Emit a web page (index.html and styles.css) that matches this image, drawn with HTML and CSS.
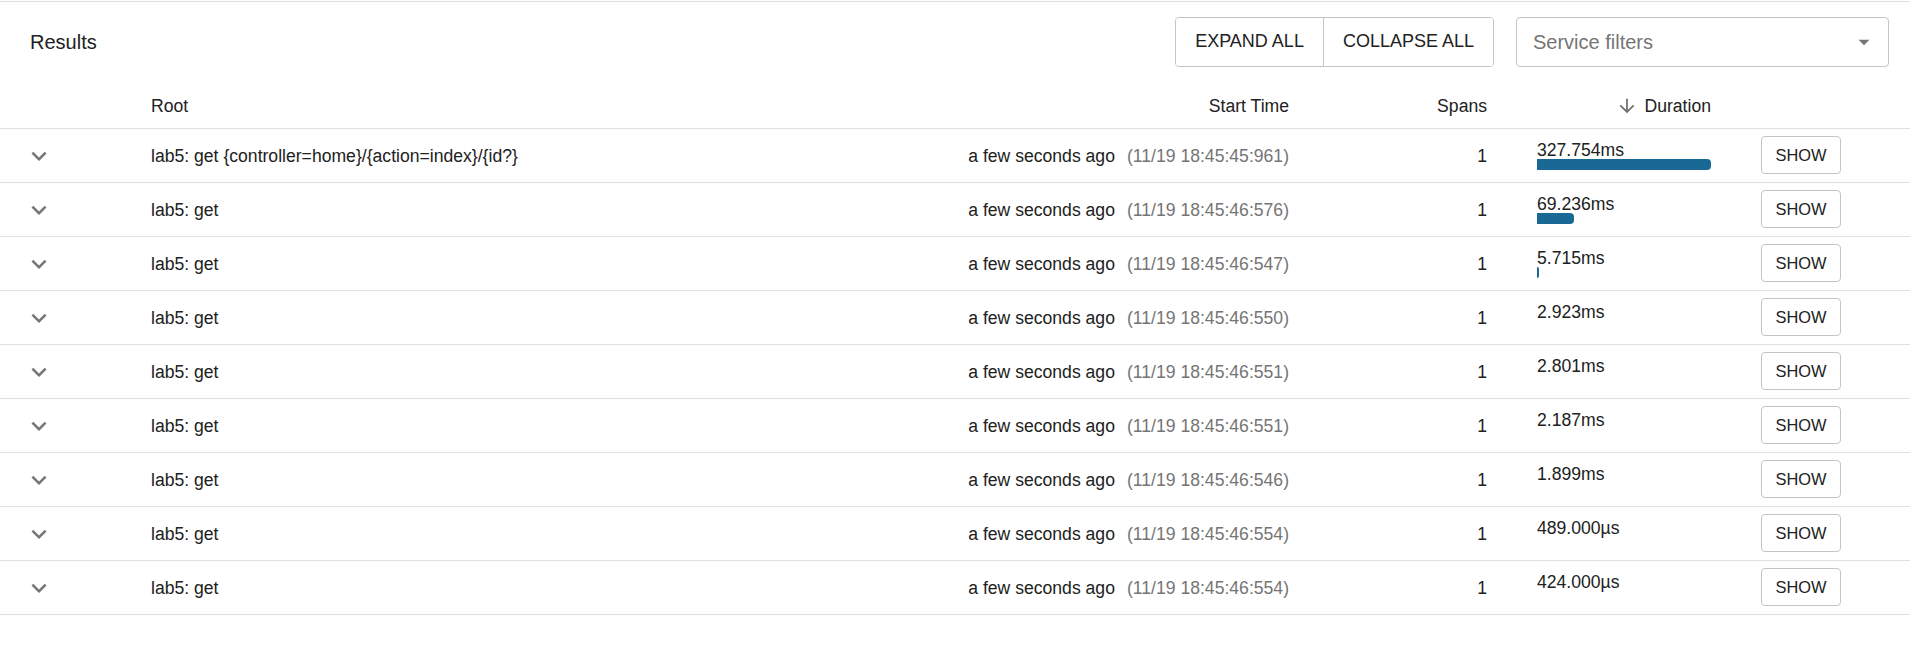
FILE: index.html
```html
<!DOCTYPE html>
<html lang="en">
<head>
<meta charset="utf-8">
<title>Results</title>
<link rel="stylesheet" href="styles.css">
</head>
<body>
<div class="page">
  <div class="toolbar">
    <div class="title">Results</div>
    <div class="btn-group">
      <button class="group-btn">EXPAND ALL</button>
      <button class="group-btn">COLLAPSE ALL</button>
    </div>
    <div class="select">
      <span class="placeholder">Service filters</span>
      <svg class="drop-icon" viewBox="0 0 24 24" width="26" height="26"><path d="M7 10l5 5 5-5z" fill="#757575"/></svg>
    </div>
  </div>

  <div class="row head">
    <div class="cell"></div>
    <div class="cell">Root</div>
    <div class="cell right">Start Time</div>
    <div class="cell right">Spans</div>
    <div class="cell right dur-head">
      <svg class="sort-icon" viewBox="0 0 24 24" width="22" height="22"><path d="M20 12l-1.41-1.41L13 16.17V4h-2v12.17l-5.58-5.59L4 12l8 8 8-8z" fill="#757575"/></svg>
      <span>Duration</span>
    </div>
    <div class="cell"></div>
  </div>

  <div class="row">
    <div class="cell chev"><svg viewBox="0 0 24 24" width="30" height="30"><path d="M16.59 8.59 12 13.17 7.41 8.59 6 10l6 6 6-6z" fill="#757575"/></svg></div>
    <div class="cell">lab5: get {controller=home}/{action=index}/{id?}</div>
    <div class="cell right">a few seconds ago<span class="abs">(11/19 18:45:45:961)</span></div>
    <div class="cell right">1</div>
    <div class="cell dur"><span class="dur-text">327.754ms</span><span class="bar" style="width:100%"></span></div>
    <div class="cell act"><button class="show">SHOW</button></div>
  </div>

  <div class="row">
    <div class="cell chev"><svg viewBox="0 0 24 24" width="30" height="30"><path d="M16.59 8.59 12 13.17 7.41 8.59 6 10l6 6 6-6z" fill="#757575"/></svg></div>
    <div class="cell">lab5: get</div>
    <div class="cell right">a few seconds ago<span class="abs">(11/19 18:45:46:576)</span></div>
    <div class="cell right">1</div>
    <div class="cell dur"><span class="dur-text">69.236ms</span><span class="bar" style="width:21%"></span></div>
    <div class="cell act"><button class="show">SHOW</button></div>
  </div>

  <div class="row">
    <div class="cell chev"><svg viewBox="0 0 24 24" width="30" height="30"><path d="M16.59 8.59 12 13.17 7.41 8.59 6 10l6 6 6-6z" fill="#757575"/></svg></div>
    <div class="cell">lab5: get</div>
    <div class="cell right">a few seconds ago<span class="abs">(11/19 18:45:46:547)</span></div>
    <div class="cell right">1</div>
    <div class="cell dur"><span class="dur-text">5.715ms</span><span class="bar" style="width:1%"></span></div>
    <div class="cell act"><button class="show">SHOW</button></div>
  </div>

  <div class="row">
    <div class="cell chev"><svg viewBox="0 0 24 24" width="30" height="30"><path d="M16.59 8.59 12 13.17 7.41 8.59 6 10l6 6 6-6z" fill="#757575"/></svg></div>
    <div class="cell">lab5: get</div>
    <div class="cell right">a few seconds ago<span class="abs">(11/19 18:45:46:550)</span></div>
    <div class="cell right">1</div>
    <div class="cell dur"><span class="dur-text">2.923ms</span><span class="bar" style="width:0%"></span></div>
    <div class="cell act"><button class="show">SHOW</button></div>
  </div>

  <div class="row">
    <div class="cell chev"><svg viewBox="0 0 24 24" width="30" height="30"><path d="M16.59 8.59 12 13.17 7.41 8.59 6 10l6 6 6-6z" fill="#757575"/></svg></div>
    <div class="cell">lab5: get</div>
    <div class="cell right">a few seconds ago<span class="abs">(11/19 18:45:46:551)</span></div>
    <div class="cell right">1</div>
    <div class="cell dur"><span class="dur-text">2.801ms</span><span class="bar" style="width:0%"></span></div>
    <div class="cell act"><button class="show">SHOW</button></div>
  </div>

  <div class="row">
    <div class="cell chev"><svg viewBox="0 0 24 24" width="30" height="30"><path d="M16.59 8.59 12 13.17 7.41 8.59 6 10l6 6 6-6z" fill="#757575"/></svg></div>
    <div class="cell">lab5: get</div>
    <div class="cell right">a few seconds ago<span class="abs">(11/19 18:45:46:551)</span></div>
    <div class="cell right">1</div>
    <div class="cell dur"><span class="dur-text">2.187ms</span><span class="bar" style="width:0%"></span></div>
    <div class="cell act"><button class="show">SHOW</button></div>
  </div>

  <div class="row">
    <div class="cell chev"><svg viewBox="0 0 24 24" width="30" height="30"><path d="M16.59 8.59 12 13.17 7.41 8.59 6 10l6 6 6-6z" fill="#757575"/></svg></div>
    <div class="cell">lab5: get</div>
    <div class="cell right">a few seconds ago<span class="abs">(11/19 18:45:46:546)</span></div>
    <div class="cell right">1</div>
    <div class="cell dur"><span class="dur-text">1.899ms</span><span class="bar" style="width:0%"></span></div>
    <div class="cell act"><button class="show">SHOW</button></div>
  </div>

  <div class="row">
    <div class="cell chev"><svg viewBox="0 0 24 24" width="30" height="30"><path d="M16.59 8.59 12 13.17 7.41 8.59 6 10l6 6 6-6z" fill="#757575"/></svg></div>
    <div class="cell">lab5: get</div>
    <div class="cell right">a few seconds ago<span class="abs">(11/19 18:45:46:554)</span></div>
    <div class="cell right">1</div>
    <div class="cell dur"><span class="dur-text">489.000µs</span><span class="bar" style="width:0%"></span></div>
    <div class="cell act"><button class="show">SHOW</button></div>
  </div>

  <div class="row">
    <div class="cell chev"><svg viewBox="0 0 24 24" width="30" height="30"><path d="M16.59 8.59 12 13.17 7.41 8.59 6 10l6 6 6-6z" fill="#757575"/></svg></div>
    <div class="cell">lab5: get</div>
    <div class="cell right">a few seconds ago<span class="abs">(11/19 18:45:46:554)</span></div>
    <div class="cell right">1</div>
    <div class="cell dur"><span class="dur-text">424.000µs</span><span class="bar" style="width:0%"></span></div>
    <div class="cell act"><button class="show">SHOW</button></div>
  </div>
</div>
</body>
</html>
```

FILE: styles.css
```css
html, body {
  margin: 0;
  padding: 0;
  background: #ffffff;
}

body {
  font-family: "Liberation Sans", Arial, sans-serif;
  color: #212121;
  padding-top: 1px;
}

.page {
  border-top: 1px solid #e0e0e0;
}

.toolbar {
  display: flex;
  align-items: center;
  padding: 15px 21px 0 30px;
}

.title {
  flex: 1;
  font-size: 20px;
  line-height: 24px;
}

.btn-group {
  display: flex;
  height: 50px;
  border: 1px solid #c4c4c4;
  border-radius: 4px;
  box-sizing: border-box;
  overflow: hidden;
}

.group-btn {
  font-family: "Liberation Sans", Arial, sans-serif;
  font-size: 18px;
  color: #212121;
  background: #ffffff;
  border: none;
  padding: 0 19px;
  margin: 0;
  line-height: 20px;
  padding-bottom: 2px;
}

.group-btn + .group-btn {
  border-left: 1px solid #c4c4c4;
}

.select {
  margin-left: 22px;
  width: 373px;
  height: 50px;
  box-sizing: border-box;
  border: 1px solid #c4c4c4;
  border-radius: 4px;
  display: flex;
  align-items: center;
  justify-content: space-between;
  padding: 0 11px 0 16px;
}

.placeholder {
  font-size: 20px;
  color: #757575;
}

.drop-icon {
  display: block;
}

.row {
  display: grid;
  grid-template-columns: 151px 1fr 400px 198px 224px 199px;
  height: 53px;
  border-bottom: 1px solid #e0e0e0;
  font-size: 17.6px;
  line-height: 20px;
}

.row.head {
  height: 61px;
}

.cell {
  display: flex;
  align-items: center;
  white-space: nowrap;
}

.head .cell {
  align-items: flex-end;
  padding-bottom: 12px;
}

.right {
  justify-content: flex-end;
}

.dur-head {
  align-items: flex-end;
}

.sort-icon {
  display: block;
  margin-right: 6px;
  margin-bottom: -1px;
}

.chev {
  padding-left: 24px;
}

.chev svg {
  display: block;
}

.abs {
  color: #757575;
  margin-left: 12px;
}

.dur {
  flex-direction: column;
  align-items: flex-start;
  justify-content: center;
  padding-left: 50px;
}

.dur-text {
  display: block;
  line-height: 17px;
}

.bar {
  display: block;
  height: 11px;
  background: #1a6896;
  border-radius: 0 4px 4px 0;
}

.act {
  padding-left: 50px;
}

.show {
  font-family: "Liberation Sans", Arial, sans-serif;
  font-size: 16.4px;
  color: #212121;
  background: #ffffff;
  border: 1px solid #c4c4c4;
  border-radius: 4px;
  width: 80px;
  height: 38px;
  padding: 0;
  margin: 0 0 1px 0;
}
```
